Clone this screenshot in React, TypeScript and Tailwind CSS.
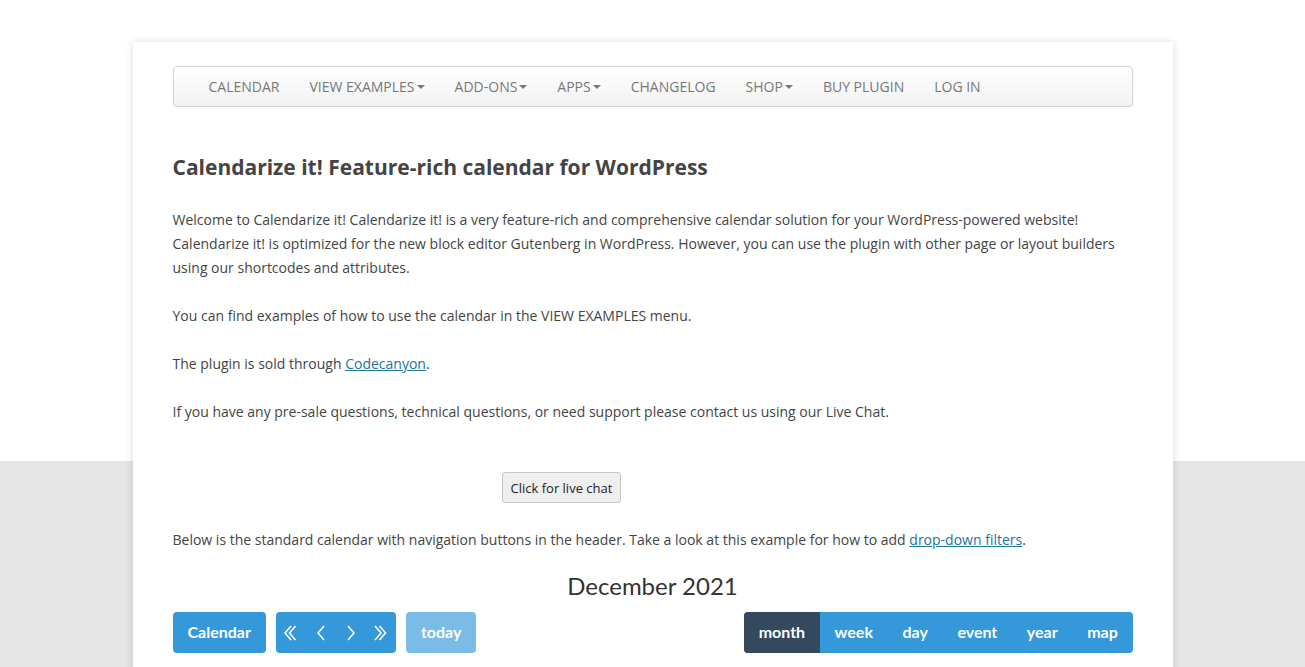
import React from 'react';

const navItems = [
  { label: 'CALENDAR', caret: false },
  { label: 'VIEW EXAMPLES', caret: true },
  { label: 'ADD-ONS', caret: true },
  { label: 'APPS', caret: true },
  { label: 'CHANGELOG', caret: false },
  { label: 'SHOP', caret: true },
  { label: 'BUY PLUGIN', caret: false },
  { label: 'LOG IN', caret: false },
];

const views = ['month', 'week', 'day', 'event', 'year', 'map'];

const Caret = () => (
  <span className="ml-[2px] inline-block w-0 h-0 border-l-[4px] border-r-[4px] border-t-[4px] border-l-transparent border-r-transparent border-t-[#777] align-middle" />
);

// thin chevrons like the calendar's icon font
const Chevron = ({ dir, double }: { dir: 'left' | 'right'; double?: boolean }) => {
  const single = (x: number) =>
    dir === 'left'
      ? `${x + 6},1 ${x},8 ${x + 6},15`
      : `${x},1 ${x + 6},8 ${x},15`;
  return (
    <svg width={double ? 13 : 8} height="16" viewBox={double ? '0 0 13 16' : '0 0 8 16'} fill="none" stroke="currentColor" strokeWidth="1.6" strokeLinejoin="miter">
      <polyline points={single(1)} />
      {double && <polyline points={single(5.5)} />}
    </svg>
  );
};

const App: React.FC = () => {
  return (
    <div className="min-h-[667px] bg-[linear-gradient(to_bottom,#ffffff_461px,#e6e6e6_461px)] pt-[42px] font-['Open_Sans',sans-serif] text-[#444]">
      <div className="mx-auto w-[1040px] bg-white px-[40px] pt-[24px] pb-[40px] shadow-[0_0_8px_rgba(0,0,0,0.14)]">
        {/* Navbar */}
        <nav className="h-[41px] flex items-center pl-[20px] rounded-[4px] border border-[#d4d4d4] bg-[linear-gradient(to_bottom,#ffffff,#f2f2f2)] shadow-[0_1px_3px_rgba(0,0,0,0.06)]">
          {navItems.map((item) => (
            <a key={item.label} className="px-[15px] text-[14px] text-[#777] flex items-center cursor-pointer">
              {item.label}
              {item.caret && <Caret />}
            </a>
          ))}
        </nav>

        {/* Intro */}
        <h1 className="mt-[45px] text-[21px] leading-[30px] font-bold text-[#444]">
          Calendarize it! Feature-rich calendar for WordPress
        </h1>

        <div className="mt-[26px] text-[14px] leading-[24px] space-y-[24px]">
          <p>
            Welcome to Calendarize it! Calendarize it! is a very feature-rich and comprehensive calendar solution for your WordPress-powered website! Calendarize it! is optimized for the new block editor Gutenberg in WordPress. However, you can use the plugin with other page or layout builders using our shortcodes and attributes.
          </p>
          <p>You can find examples of how to use the calendar in the VIEW EXAMPLES menu.</p>
          <p>
            The plugin is sold through <a className="text-[#21759b] underline cursor-pointer">Codecanyon</a>.
          </p>
          <p>If you have any pre-sale questions, technical questions, or need support please contact us using our Live Chat.</p>
        </div>

        <div className="mt-[48px] pl-[329px]">
          <button className="h-[31px] pt-[2px] px-[8px] rounded-[3px] border border-[#c6c6c6] bg-[#efefef] text-[13px] text-[#222]">
            Click for live chat
          </button>
        </div>

        <p className="mt-[25px] text-[14px] leading-[24px]">
          Below is the standard calendar with navigation buttons in the header. Take a look at this example for how to add{' '}
          <a className="text-[#21759b] underline cursor-pointer">drop-down filters</a>.
        </p>

        {/* Calendar header */}
        <div className="mt-[19px] text-center text-[24px] leading-[30px] text-[#333] font-['Lato',sans-serif]">
          December 2021
        </div>

        <div className="mt-[11px] flex items-center justify-between font-['Lato',sans-serif] font-bold text-[16px] leading-[24px] text-white">
          <div className="flex items-center gap-[10px]">
            <button className="h-[41px] pb-[1px] px-[15px] rounded-[4px] bg-[#3498db]">Calendar</button>
            <div className="flex h-[41px] rounded-[4px] bg-[#3498db] overflow-hidden">
              <button className="w-[30px] flex items-center justify-center"><Chevron dir="left" double /></button>
              <button className="w-[30px] flex items-center justify-center pl-[1px]"><Chevron dir="left" /></button>
              <button className="w-[30px] flex items-center justify-center"><Chevron dir="right" /></button>
              <button className="w-[30px] flex items-center justify-center"><Chevron dir="right" double /></button>
            </div>
            <button className="h-[41px] pb-[1px] px-[15px] rounded-[4px] bg-[#3498db] opacity-65">today</button>
          </div>
          <div className="flex h-[41px] rounded-[4px] overflow-hidden bg-[#3498db]">
            {views.map((v) => (
              <button key={v} className={`px-[14.75px] pb-[1px] ${v === 'month' ? 'bg-[#34495e]' : ''}`}>
                {v}
              </button>
            ))}
          </div>
        </div>
      </div>
    </div>
  );
};

export default App;
